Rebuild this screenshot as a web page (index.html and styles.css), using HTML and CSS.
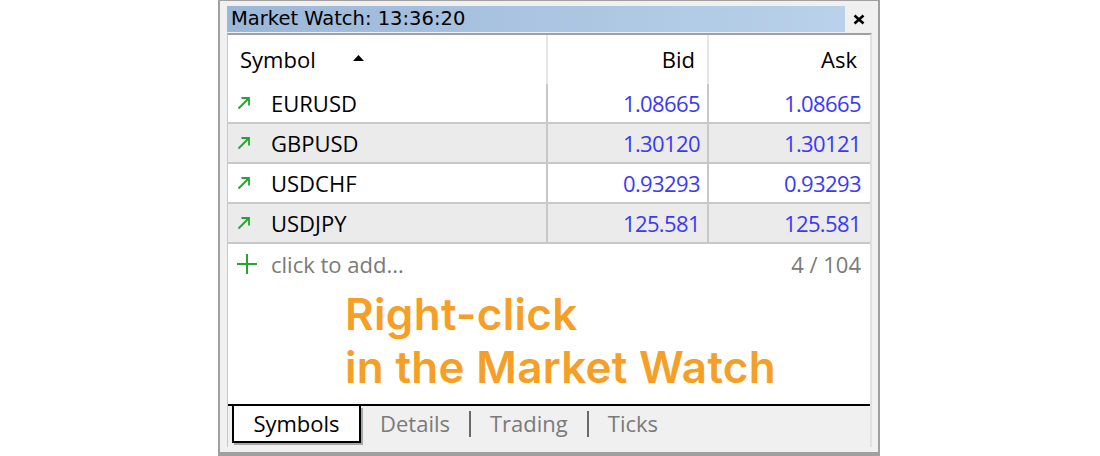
FILE: index.html
```html
<!DOCTYPE html>
<html>
<head>
<meta charset="utf-8">
<link rel="stylesheet" href="styles.css">
</head>
<body>
<div class="window">
  <div class="title-row">
    <div class="titlebar">Market Watch: 13:36:20</div>
    <div class="close">
      <svg width="12" height="11" viewBox="0 0 12 11"><path d="M1.5 1.5 L10.5 9.5 M10.5 1.5 L1.5 9.5" stroke="#000" stroke-width="2.6" fill="none"/></svg>
    </div>
  </div>
  <div class="panel">
    <div class="grid head">
      <div class="cell sym">Symbol<span class="sort"><svg width="11" height="6" viewBox="0 0 11 6"><path d="M5.5 0 L11 6 L0 6 Z" fill="#000"/></svg></span></div>
      <div class="cell num hsep">Bid</div>
      <div class="cell num last">Ask</div>
    </div>
    <div class="grid row">
      <div class="cell sym"><svg class="arr" width="14" height="14" viewBox="0 0 14 14"><path d="M1.5 12.5 L12 2 M4.5 2 L12 2 L12 9.5" stroke="#1fa82e" stroke-width="1.8" fill="none"/></svg>EURUSD</div>
      <div class="cell num sep">1.08665</div>
      <div class="cell num last">1.08665</div>
    </div>
    <div class="grid row alt">
      <div class="cell sym"><svg class="arr" width="14" height="14" viewBox="0 0 14 14"><path d="M1.5 12.5 L12 2 M4.5 2 L12 2 L12 9.5" stroke="#1fa82e" stroke-width="1.8" fill="none"/></svg>GBPUSD</div>
      <div class="cell num sep">1.30120</div>
      <div class="cell num last">1.30121</div>
    </div>
    <div class="grid row">
      <div class="cell sym"><svg class="arr" width="14" height="14" viewBox="0 0 14 14"><path d="M1.5 12.5 L12 2 M4.5 2 L12 2 L12 9.5" stroke="#1fa82e" stroke-width="1.8" fill="none"/></svg>USDCHF</div>
      <div class="cell num sep">0.93293</div>
      <div class="cell num last">0.93293</div>
    </div>
    <div class="grid row alt">
      <div class="cell sym"><svg class="arr" width="14" height="14" viewBox="0 0 14 14"><path d="M1.5 12.5 L12 2 M4.5 2 L12 2 L12 9.5" stroke="#1fa82e" stroke-width="1.8" fill="none"/></svg>USDJPY</div>
      <div class="cell num sep">125.581</div>
      <div class="cell num last">125.581</div>
    </div>
    <div class="add-row">
      <svg class="plus" width="22" height="22" viewBox="0 0 22 22"><path d="M11 1 V21 M1 11 H21" stroke="#1fa82e" stroke-width="2" fill="none"/></svg>
      <span class="add-text">click to add...</span>
      <span class="count">4 / 104</span>
    </div>
    <div class="free">
      <div class="note">Right-click<br>in the Market Watch</div>
    </div>
    <div class="tabs">
      <div class="tab active">Symbols</div>
      <div class="tab">Details</div>
      <div class="tsep"></div>
      <div class="tab">Trading</div>
      <div class="tsep"></div>
      <div class="tab">Ticks</div>
    </div>
  </div>
</div>
</body>
</html>
```
FILE: styles.css
```css
* { box-sizing: border-box; }
html, body { margin: 0; padding: 0; background: #fff; }
body { width: 1100px; height: 456px; overflow: hidden; }

.window {
  margin-left: 218px;
  width: 662px;
  height: 456px;
  background: #f0f0f0;
  border-left: 2px solid #a0a0a0;
  border-right: 2px solid #a0a0a0;
  border-top: 1px solid #a0a0a0;
  border-bottom: 4px solid #a0a0a0;
  padding: 5px 6px 5px 7px;
  display: flex;
  flex-direction: column;
}

.title-row {
  display: flex;
  height: 27px;
}
.titlebar {
  width: 618px;
  height: 26px;
  background: linear-gradient(to right, #9bb7d8, #b9d1ea);
  font-family: "DejaVu Sans", sans-serif;
  font-size: 19.5px;
  line-height: 26px;
  color: #000;
  padding-left: 4px;
  white-space: nowrap;
}
.close {
  flex: 1;
  display: flex;
  align-items: center;
  justify-content: center;
  height: 26px;
}

.panel {
  flex: 1;
  display: flex;
  flex-direction: column;
  background: #fff;
  border-top: 2px solid #a0a0a0;
  border-left: 1px solid #c8c8c8;
  border-right: 2px solid #e0e0e0;
  font-family: "Open Sans", "Noto Sans", sans-serif;
  font-size: 22px;
  line-height: 30px;
  color: #000;
}

.grid {
  display: grid;
  grid-template-columns: 320px 161px 161px;
}
.head { height: 49px; }
.row { height: 40px; border-bottom: 2px solid #c8c8c8; }
.row.alt { background: #ebebeb; }

.cell {
  display: flex;
  align-items: center;
  white-space: nowrap;
  padding-bottom: 1px;
}
.sym { padding-left: 12px; }
.row .sym { padding-left: 9px; }
.arr { margin-right: 20px; }
.num { justify-content: flex-end; color: #3a3af6; padding-right: 7px; letter-spacing: -0.6px; }
.num.last { padding-right: 9px; }
.head .num { color: #000; padding-right: 12px; letter-spacing: 0; }
.head .num.last { padding-right: 13px; }
.sep { border-right: 2px solid #c8c8c8; }
.row .sym { border-right: 2px solid #c8c8c8; }
.head .sym { border-right: 2px solid #e6e6e6; }
.hsep { border-right: 2px solid #e6e6e6; }
.sort { margin-left: 37px; display: flex; align-items: center; margin-top: -2px; }

.add-row {
  height: 40px;
  display: flex;
  align-items: center;
  padding-left: 8px;
  padding-right: 9px;
  padding-bottom: 1px;
  color: #7a7a7a;
}
.plus { margin-right: 13px; }
.count { margin-left: auto; }

.free {
  height: 120px;
  padding-left: 117px;
  padding-top: 4px;
}
.note {
  font-family: "Inter", sans-serif;
  font-weight: 600;
  font-size: 44px;
  line-height: 53px;
  letter-spacing: 0.3px;
  color: #f59f26;
}

.tabs {
  height: 43px;
  background: #f0f0f0;
  border-top: 2px solid #000;
  display: flex;
  align-items: flex-start;
  color: #7a7a7a;
}
.tab {
  height: 34px;
  display: flex;
  align-items: center;
  padding: 0 19px;
}
.tab.active {
  margin-left: 4px;
  width: 129px;
  height: 37px;
  background: #fff;
  color: #000;
  border: 2px solid #000;
  border-top: none;
  justify-content: center;
  box-shadow: 2px 2px 0 #a8a8a8;
  padding: 0 0 2px 0;
}
.tsep {
  width: 2px;
  height: 26px;
  margin-top: 5px;
  background: #6a6a6a;
}
```
